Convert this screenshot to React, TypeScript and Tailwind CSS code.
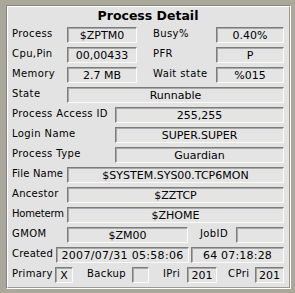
import React from "react";

const font = { fontFamily: '"DejaVu Sans", Verdana, sans-serif' };

const Field: React.FC<{ className?: string; children?: React.ReactNode }> = ({ className = "", children }) => (
  <div
    className={`h-4 flex items-center justify-center bg-[#e4e4e4] border border-t-[#7c7c7c] border-l-[#7c7c7c] border-b-[#fbfbf4] border-r-[#fbfbf4] shadow-[inset_1px_1px_0_#a8a8a8] text-[11px] leading-none text-black whitespace-nowrap overflow-hidden ${className}`}
  >
    {children}
  </div>
);

const Label: React.FC<{ className?: string; children: React.ReactNode }> = ({ className = "", children }) => (
  <span className={`shrink-0 pb-[3px] text-[10px] leading-none text-black whitespace-nowrap ${className}`}>
    {children}
  </span>
);

export default function App() {
  return (
    <div className="w-[295px] h-[293px] bg-[#aba899] pt-[5px] pl-[6px]" style={font}>
      <div className="w-[285px] h-[284px] border border-t-[#858585] border-l-[#858585] border-b-white border-r-white">
        <div className="h-full border border-t-white border-l-white border-b-[#9a9a9a] border-r-[#9a9a9a] bg-[#e3e3e3] pl-1 pr-[5px]">
          <div className="h-5 flex items-center justify-center text-[12.5px] font-bold text-black pb-[1px]">
            Process Detail
          </div>
          <div className="flex flex-col gap-1">
            <div className="flex items-center">
              <Label className="w-[55px] tracking-[0.4px]">Process</Label>
              <Field className="w-[70px]">$ZPTM0</Field>
              <Label className="ml-4 w-[63px] tracking-[0.4px]">Busy%</Label>
              <Field className="flex-1">0.40%</Field>
            </div>
            <div className="flex items-center">
              <Label className="w-[55px] tracking-[0.4px]">Cpu,Pin</Label>
              <Field className="w-[70px]">00,00433</Field>
              <Label className="ml-4 w-[63px] tracking-[0.4px]">PFR</Label>
              <Field className="flex-1">P</Field>
            </div>
            <div className="flex items-center">
              <Label className="w-[55px] tracking-[0.4px]">Memory</Label>
              <Field className="w-[70px]">2.7 MB</Field>
              <Label className="ml-4 w-[63px] tracking-[0.4px]">Wait state</Label>
              <Field className="flex-1">%015</Field>
            </div>
            <div className="flex items-center">
              <Label className="w-[55px] tracking-[0.4px]">State</Label>
              <Field className="flex-1">Runnable</Field>
            </div>
            <div className="flex items-center">
              <Label className="w-[103px] tracking-[0.4px]">Process Access ID</Label>
              <Field className="flex-1">255,255</Field>
            </div>
            <div className="flex items-center">
              <Label className="w-[103px] tracking-[0.4px]">Login Name</Label>
              <Field className="flex-1">SUPER.SUPER</Field>
            </div>
            <div className="flex items-center">
              <Label className="w-[103px] tracking-[0.4px]">Process Type</Label>
              <Field className="flex-1">Guardian</Field>
            </div>
            <div className="flex items-center">
              <Label className="w-[55px] tracking-[0.2px]">File Name</Label>
              <Field className="flex-1">$SYSTEM.SYS00.TCP6MON</Field>
            </div>
            <div className="flex items-center">
              <Label className="w-[55px] tracking-[0.3px]">Ancestor</Label>
              <Field className="flex-1">$ZZTCP</Field>
            </div>
            <div className="flex items-center">
              <Label className="w-[55px] tracking-[-0.2px]">Hometerm</Label>
              <Field className="flex-1">$ZHOME</Field>
            </div>
            <div className="flex items-center">
              <Label className="w-[55px] tracking-[0.4px]">GMOM</Label>
              <Field className="w-[121px]">$ZM00</Field>
              <Label className="ml-[12px] w-[36px] tracking-[0.4px]">JobID</Label>
              <Field className="flex-1" />
            </div>
            <div className="flex items-center">
              <Label className="w-[44px] tracking-[0.2px]">Created</Label>
              <Field className="w-[133px] tracking-[0.3px]">2007/07/31 05:58:06</Field>
              <Field className="ml-[2px] flex-1 tracking-[0.2px]">64 07:18:28</Field>
            </div>
            <div className="flex items-center">
              <Label className="w-[43px] tracking-[0.3px]">Primary</Label>
              <Field className="w-[18px]">X</Field>
              <Label className="ml-[14px] w-[45px] tracking-[0.4px]">Backup</Label>
              <Field className="w-[17px]" />
              <Label className="ml-[14px] w-[24px] tracking-[0.4px]">IPri</Label>
              <Field className="w-[30px]">201</Field>
              <Label className="ml-[11px] w-[27px] tracking-[0.4px]">CPri</Label>
              <Field className="flex-1">201</Field>
            </div>
          </div>
        </div>
      </div>
    </div>
  );
}
